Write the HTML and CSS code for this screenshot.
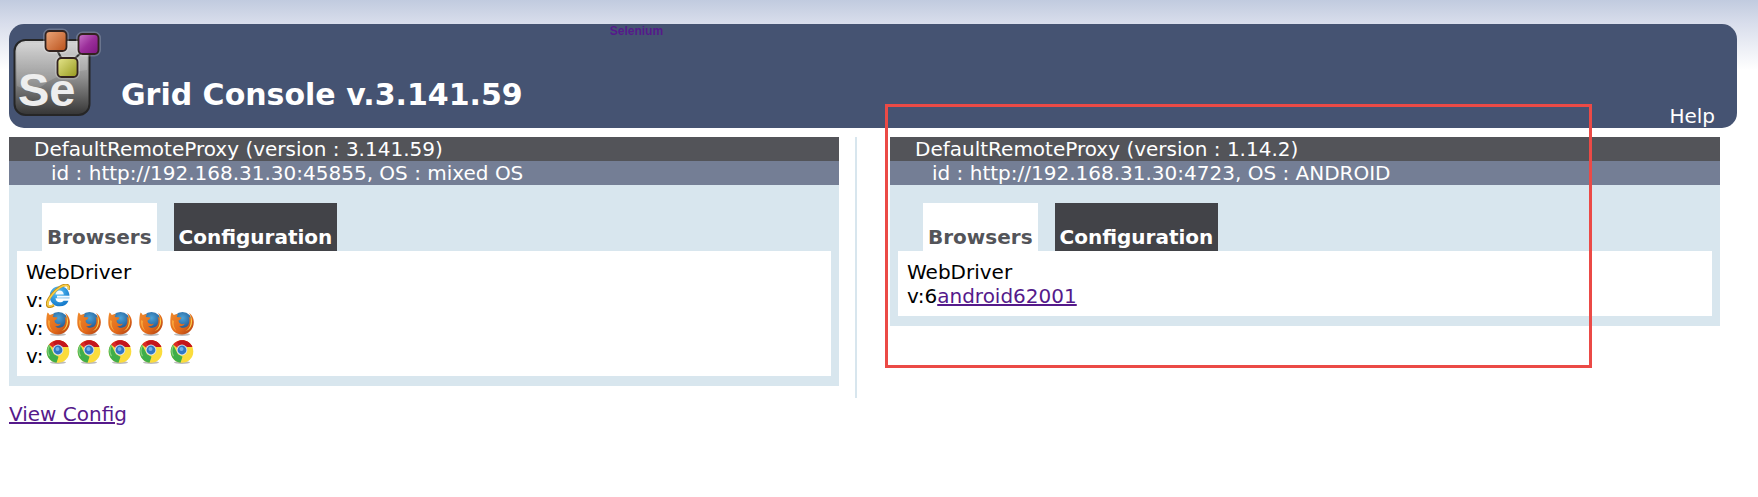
FILE: index.html
```html
<!DOCTYPE html>
<html>
  <head>
    <meta charset="utf-8">
    <title>Grid Console</title>
    <link rel="stylesheet" href="styles.css">
  </head>
  <body>
    <svg class="defs" width="0" height="0">
      <defs>
        <linearGradient id="tile" x1="0" y1="0" x2="0" y2="1">
          <stop offset="0" stop-color="#d2d2d2"/>
          <stop offset="0.5" stop-color="#8f8f8f"/>
          <stop offset="1" stop-color="#353535"/>
        </linearGradient>
        <linearGradient id="orange" x1="0" y1="0" x2="1" y2="1">
          <stop offset="0" stop-color="#eda77a"/>
          <stop offset="1" stop-color="#b9501a"/>
        </linearGradient>
        <linearGradient id="purple" x1="0" y1="0" x2="1" y2="1">
          <stop offset="0" stop-color="#c975c9"/>
          <stop offset="0.5" stop-color="#9b2f9a"/>
          <stop offset="1" stop-color="#7d1480"/>
        </linearGradient>
        <linearGradient id="olive" x1="0" y1="0" x2="1" y2="1">
          <stop offset="0" stop-color="#e6e68c"/>
          <stop offset="1" stop-color="#96981c"/>
        </linearGradient>
        <radialGradient id="ieblue" cx="0.4" cy="0.3" r="0.8">
          <stop offset="0" stop-color="#5cc4f8"/>
          <stop offset="1" stop-color="#0b6fc4"/>
        </radialGradient>
        <radialGradient id="globe" cx="0.5" cy="0.3" r="0.7">
          <stop offset="0" stop-color="#4ba3d8"/>
          <stop offset="1" stop-color="#15407c"/>
        </radialGradient>
        <linearGradient id="fox" x1="0" y1="0" x2="1" y2="1">
          <stop offset="0" stop-color="#f08a2c"/>
          <stop offset="0.6" stop-color="#e2691a"/>
          <stop offset="1" stop-color="#a93a12"/>
        </linearGradient>
      </defs>
      <symbol id="ie" viewBox="0 0 24 24">
        <path d="M23.500 14.200H9.500C9.800 17 11.500 18.300 13.800 18.300c1.800 0 2.900-.6 3.700-1.600h5C21 20.300 18 22.300 13.800 22.300c-6 0-10-4-10-10.100S7.900 2.200 13.800 2.200c5.700 0 9.700 4 9.700 10z" fill="url(#ieblue)"/>
        <path d="M9.500 10.500h8.300C17.400 7.900 15.900 6.600 13.700 6.600s-3.800 1.300-4.200 3.900z" fill="#f2faff"/>
        <path d="M11 12.700h13" stroke="#f2faff" stroke-width="2"/>
        <path d="M22.600 5.600C23.300 3.500 22.800 1.500 21 1 17.500 0 10.500 4.500 6 10.200 1.800 15.500.2 20.500 2 22.300c1.100 1 3.400.4 6-1.200" fill="none" stroke="#c78f16" stroke-width="2.600"/>
        <path d="M22.600 5.200C23 3.300 22.400 1.800 20.800 1.400 17.500.6 11 4.800 6.600 10.200 2.400 15.300.8 20 2.200 21.600c1 1 3 .5 5.300-.8" fill="none" stroke="#f6cf4a" stroke-width="1.500"/>
      </symbol>
      <symbol id="firefox" viewBox="0 0 24 24">
        <ellipse cx="12" cy="22.500" rx="8" ry="1.500" fill="#bbb"/>
        <circle cx="12.500" cy="10" r="10" fill="url(#globe)"/>
        <path d="M1.500.5c1 .6 1.700 1.600 2.200 2.400C5.500 2.200 7 2.200 8 2.600c-.8.8-1.200 1.600-1.200 2.500 1.500.3 2.900.4 4.600.5-.2 1.500-1.500 2.300-2.900 2.900.2 1 .2 1.800 1 2.600 1.200 1.200 3.300 1.500 5.200.4-.5 2.300-3.400 3.200-5.700 2.500 2.500 2.800 7.300 2.300 9.300-.9 1.600-2.700 1.300-6.400.3-8.300 1 .4 1.900 1.300 2.400 2.100C20.800 4.500 20 2 18.800.8c3 1.700 5.200 5.500 5 9.800-.2 6.800-5.400 11.900-11.800 11.900C5.200 22.500.3 17.500.3 11 .3 7 .5 3 1.500.5z" fill="url(#fox)"/>
        <path d="M20 3c2.500 3.500 2.700 8.300.8 11.800-1.400 2.500-3.300 3.800-5.500 4.400C20.500 16.500 22.100 9.700 20 3z" fill="#fbd04a"/>
        <path d="M2.200 8c-.8 4 .5 8.500 4.300 11.200C4.200 16 3 12.500 4 9z" fill="#f9a53c"/>
      </symbol>
      <symbol id="chrome" viewBox="0 0 24 24">
        <ellipse cx="12" cy="22.500" rx="8" ry="1.500" fill="#bbb"/>
        <circle cx="12" cy="11.500" r="11.300" fill="#fbdc3c"/>
        <path d="M12 11.500L3 4.600C5 2 8.200.2 12 .2c4.500 0 8.600 2.600 10.400 6.800H12z" fill="#da2a26"/>
        <path d="M12 .2c4.500 0 8.600 2.600 10.400 6.800H13c-2 0-4.500-1-6-4.900C8.500.8 10.200.2 12 .2z" fill="#c4161c"/>
        <path d="M3 4.600l5 9.600 4.500 2.500-2 6C5 22 .7 17.300.7 11.500c0-2.600.8-5 2.300-6.900z" fill="#3fae49"/>
        <path d="M3.500 5.500C1.400 9 1.600 13 3.500 16.300" fill="none" stroke="#86d27d" stroke-width="1.200"/>
        <circle cx="12" cy="10" r="5.400" fill="#d5e1ea"/>
        <circle cx="12" cy="10" r="4.400" fill="#2f78c4"/>
        <circle cx="11.500" cy="9" r="2" fill="#74b2ea"/>
      </symbol>
    </svg>

    <header class="header">
      <svg class="logo" viewBox="0 0 92 104">
        <rect x="5.500" y="16" width="75" height="75" rx="11" fill="url(#tile)" stroke="#262626" stroke-width="2"/>
        <path d="M8 62V28q0-9 9-9h52q9 0 9 9v18Q48 50 36 60T8 62z" fill="#fff" opacity="0.140"/>
        <path d="M48 26l9 17M76 25L61 39" stroke="#333" stroke-width="2"/>
        <g fill="none" stroke="#fff" stroke-width="5" opacity="0.200">
          <rect x="36.500" y="7" width="21" height="20" rx="4"/>
          <rect x="69.500" y="10" width="20" height="20" rx="4"/>
          <rect x="48.500" y="34" width="20" height="19" rx="4"/>
        </g>
        <g stroke="#33231f" stroke-width="1.800">
          <rect x="36.500" y="7" width="21" height="20" rx="4" fill="url(#orange)"/>
          <rect x="69.500" y="10" width="20" height="20" rx="4" fill="url(#purple)"/>
          <rect x="48.500" y="34" width="20" height="19" rx="4" fill="url(#olive)"/>
        </g>
        <text class="logo-text" x="9" y="82">Se</text>
      </svg>
      <h1>Grid Console v.3.141.59</h1>
      <a class="selenium" href="#">Selenium</a>
      <a class="help" href="#">Help</a>
    </header>

    <main class="console">
      <section class="column left">
        <div class="proxy">
          <p class="proxyname">DefaultRemoteProxy (version : 3.141.59)</p>
          <p class="proxyid">id : http://192.168.31.30:45855, OS : mixed OS</p>
          <div class="tabs">
            <button type="button" class="tab selected">Browsers</button>
            <button type="button" class="tab">Configuration</button>
          </div>
          <div class="content">
            <p>WebDriver</p>
            <div class="browsers">
              <span>v:</span>
              <svg class="icon"><use href="#ie"/></svg>
            </div>
            <div class="browsers">
              <span>v:</span>
              <svg class="icon"><use href="#firefox"/></svg>
              <svg class="icon"><use href="#firefox"/></svg>
              <svg class="icon"><use href="#firefox"/></svg>
              <svg class="icon"><use href="#firefox"/></svg>
              <svg class="icon"><use href="#firefox"/></svg>
            </div>
            <div class="browsers">
              <span>v:</span>
              <svg class="icon"><use href="#chrome"/></svg>
              <svg class="icon"><use href="#chrome"/></svg>
              <svg class="icon"><use href="#chrome"/></svg>
              <svg class="icon"><use href="#chrome"/></svg>
              <svg class="icon"><use href="#chrome"/></svg>
            </div>
          </div>
        </div>
      </section>

      <section class="column right">
        <div class="proxy">
          <p class="proxyname">DefaultRemoteProxy (version : 1.14.2)</p>
          <p class="proxyid">id : http://192.168.31.30:4723, OS : ANDROID</p>
          <div class="tabs">
            <button type="button" class="tab selected">Browsers</button>
            <button type="button" class="tab">Configuration</button>
          </div>
          <div class="content">
            <p>WebDriver</p>
            <p>v:6<a href="#">android62001</a></p>
          </div>
        </div>
        <div class="marker"></div>
      </section>
    </main>

    <a class="config" href="#">View Config</a>
  </body>
</html>
```
FILE: styles.css
```css
* {
  box-sizing: border-box;
}

body {
  margin: 0;
  padding: 24px 21px 0 9px;
  font-family: Verdana, "DejaVu Sans", sans-serif;
  font-size: 20px;
  line-height: 24px;
  color: #000;
  background: #fff linear-gradient(#c1cbdf, #d9deec 24px, #fff 70px) no-repeat;
}

p {
  margin: 0;
}

a {
  color: #551a8b;
}

.defs {
  display: block;
}

.header {
  display: flex;
  align-items: flex-start;
  height: 104px;
  padding-right: 22px;
  border-radius: 15px;
  background-color: #455372;
}

.logo {
  width: 92px;
  height: 104px;
}

.logo-text {
  font: bold 47px "Liberation Sans", Arial, sans-serif;
  fill: #eee;
}

.header h1 {
  margin: 53px 0 0 20px;
  font-size: 30px;
  line-height: 36px;
  color: #fff;
}

.selenium {
  margin-left: 87px;
  font: bold 12px/14px "Liberation Sans", Arial, sans-serif;
  text-decoration: none;
}

.help {
  align-self: flex-end;
  margin-left: auto;
  color: #fff;
  text-decoration: none;
}

.console {
  display: flex;
  padding: 9px 17px 0 0;
}

.column {
  box-sizing: content-box;
  flex: 1;
}

.left {
  margin-right: 33px;
  padding: 0 16px 12px 0;
  border-right: 2px solid #d8e6ee;
}

.right {
  position: relative;
}

.proxy {
  padding-bottom: 10px;
  background-color: #d8e6ee;
}

.proxyname {
  padding-left: 25px;
  color: #fff;
  background-color: #535459;
}

.proxyid {
  padding-left: 42px;
  color: #fff;
  background-color: #747e95;
}

.tabs {
  display: flex;
  gap: 17px;
  padding: 18px 0 0 33px;
}

.tab {
  height: 48px;
  padding: 20px 5px 0;
  border: 0;
  font: inherit;
  font-weight: bold;
  color: #fff;
  background-color: #424348;
}

.tab.selected {
  color: #535459;
  background-color: #fff;
}

.content {
  margin: 0 8px;
  padding: 9px 9px 8px;
  background-color: #fff;
}

.browsers {
  display: flex;
  gap: 7px;
  height: 28px;
}

.browsers span {
  align-self: flex-end;
  margin-right: -4px;
}

.icon {
  width: 24px;
  height: 24px;
}

/* red frame over the second proxy */
.marker {
  position: absolute;
  top: -33px;
  left: -5px;
  width: calc(85% + 1px);
  height: 264px;
  border: 3px solid #eb4a46;
  pointer-events: none;
}

.config {
  display: inline-block;
  margin-top: 4px;
}
```
